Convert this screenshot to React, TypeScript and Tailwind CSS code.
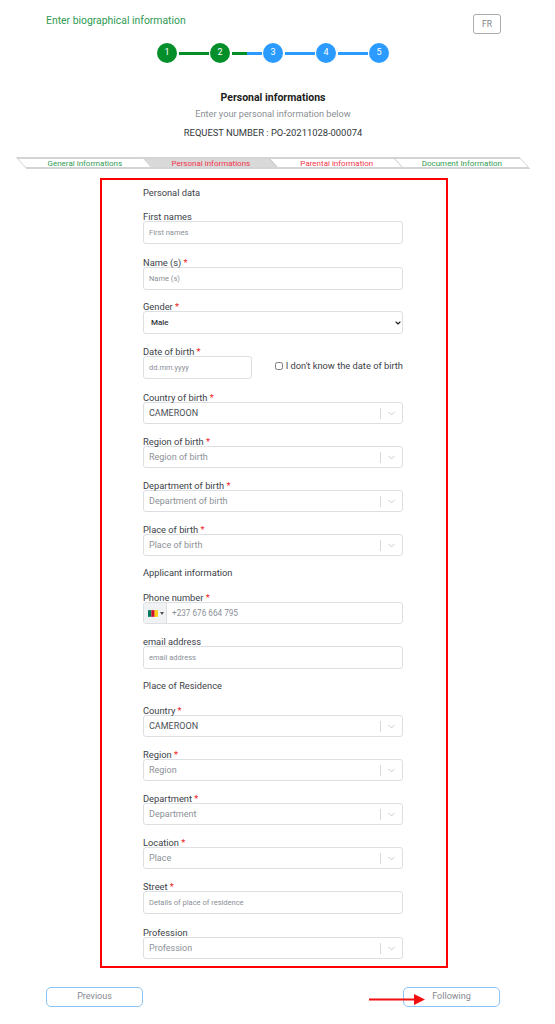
import { ChevronDown } from "lucide-react";

const inputBox = "block w-full rounded-[3px] border border-[#dcdfe3] bg-white text-[#6b7280] outline-none";

function Label({ text, required }: { text: string; required?: boolean }) {
  return (
    <div className="h-[11px] text-[9.3px] leading-[13px] whitespace-nowrap text-[#3c4248]">
      {text}
      {required && <span className="text-[#f01c1c]"> *</span>}
    </div>
  );
}

function TextField({ label, placeholder, required, className }: { label: string; placeholder: string; required?: boolean; className?: string }) {
  return (
    <div className={className}>
      <Label text={label} required={required} />
      <input
        placeholder={placeholder}
        className={`${inputBox} h-[23px] px-[5px] text-[7.5px] placeholder:text-[#8a9097]`}
      />
    </div>
  );
}

function PickField({ label, value, muted, required, className }: { label: string; value: string; muted?: boolean; required?: boolean; className?: string }) {
  return (
    <div className={className}>
      <Label text={label} required={required} />
      <div className={`${inputBox} flex h-[22px] items-center pl-[5px] text-[9px]`}>
        <span className={`pt-px ${muted ? "text-[#8c9197]" : "text-[#4b5157]"}`}>{value}</span>
        <div className="ml-auto h-[11px] w-px bg-[#d5d7da]" />
        <ChevronDown size={11} className="mx-[5px] text-[#c3c6ca]" />
      </div>
    </div>
  );
}

function Step({ n, done }: { n: number; done?: boolean }) {
  return (
    <div className={`grid size-[20px] place-items-center rounded-full text-[9px] text-white ${done ? "bg-[#058f2b]" : "bg-[#2b9bff]"}`}>
      {n}
    </div>
  );
}

export default function App() {
  return (
    <div className="h-[1024px] w-[555px] bg-white font-['Roboto',sans-serif]">
      <div className="w-[546px]">
        <div className="flex items-start justify-between pt-[14px] pr-[45px] pl-[46px]">
          <span className="text-[10.4px] leading-[13px] text-[#2f9a52]">Enter biographical information</span>
          <button className="h-[20px] w-[28px] rounded-[3px] border border-[#a9adb1] text-[8.5px] text-[#7b8085]">FR</button>
        </div>

        <div className="mt-[9px] flex items-center justify-center">
          <Step n={1} done />
          <div className="mx-[1.5px] h-[3px] w-[30px] bg-[#058f2b]" />
          <Step n={2} done />
          <div className="mx-[1.5px] flex h-[3px] w-[30px]">
            <div className="w-[15px] bg-[#058f2b]" />
            <div className="flex-1 bg-[#2b9bff]" />
          </div>
          <Step n={3} />
          <div className="mx-[1.5px] h-[3px] w-[30px] bg-[#2b9bff]" />
          <Step n={4} />
          <div className="mx-[1.5px] h-[3px] w-[30px] bg-[#2b9bff]" />
          <Step n={5} />
        </div>

        <div className="mt-[28px] text-center text-[10.5px] leading-[13px] font-bold text-[#1b1d20]">Personal informations</div>
        <div className="mt-[3px] text-center text-[9.2px] leading-[13px] text-[#8b8f94]">Enter your personal information below</div>
        <div className="mt-[6px] text-center text-[9.4px] leading-[13px] text-[#33373b]">REQUEST NUMBER : PO-20211028-000074</div>

        <div className="mx-auto mt-[18px] flex h-[12px] w-[504px] skew-x-[42deg] border-x border-y-2 border-[#d2d4d6] text-center text-[8px] leading-[9px]">
          <div className="flex-1 border-r border-[#c4c6c8]">
            <div className="-skew-x-[42deg] text-[#2f9a52]">General informations</div>
          </div>
          <div className="flex-1 border-r border-[#c4c6c8] bg-[#d9d9d9]">
            <div className="-skew-x-[42deg] text-[#f5344a]">Personal informations</div>
          </div>
          <div className="flex-1 border-r border-[#c4c6c8]">
            <div className="-skew-x-[42deg] text-[#f5344a]">Parental information</div>
          </div>
          <div className="flex-1">
            <div className="-skew-x-[42deg] text-[#2f9a52]">Document Information</div>
          </div>
        </div>

        <div className="mt-[9px] ml-[100px] h-[790px] w-[348px] border-2 border-[#ff0000] pt-[7px] pl-[41px]">
          <div className="w-[260px]">
            <div className="text-[9.3px] leading-[12px] text-[#3c4248]">Personal data</div>
            <TextField className="mt-[11px]" label="First names" placeholder="First names" />
            <TextField className="mt-[12px]" label="Name (s)" placeholder="Name (s)" required />

            <div className="mt-[10px]">
              <Label text="Gender" required />
              <div className="relative">
                <select className={`${inputBox} h-[23px] appearance-none pl-[7px] text-[8px] font-medium text-[#33373b]`}>
                  <option>Male</option>
                </select>
                <ChevronDown size={8} strokeWidth={3.5} className="absolute top-[8px] right-[1px] text-[#222]" />
              </div>
            </div>

            <div className="mt-[11px] flex items-end">
              <TextField className="w-[109px]" label="Date of birth" placeholder="dd.mm.yyyy" required />
              <label className="mb-[7px] ml-auto flex items-center gap-[3px] text-[9.3px] leading-[12px] whitespace-nowrap text-[#3c4248]">
                <input type="checkbox" className="size-[8px]" />
                I don't know the date of birth
              </label>
            </div>

            <PickField className="mt-[12px]" label="Country of birth" value="CAMEROON" required />
            <PickField className="mt-[11px]" label="Region of birth" value="Region of birth" muted required />
            <PickField className="mt-[11px]" label="Department of birth" value="Department of birth" muted required />
            <PickField className="mt-[11px]" label="Place of birth" value="Place of birth" muted required />

            <div className="mt-[11px] text-[9.3px] leading-[12px] text-[#3c4248]">Applicant information</div>
            <div className="mt-[12px]">
              <Label text="Phone number" required />
              <div className={`${inputBox} flex h-[22px] items-center overflow-hidden`}>
                <div className="flex h-full w-[23px] shrink-0 items-center gap-[2px] border-r border-[#dcdfe3] bg-[#f1f2f3] pl-[4px]">
                  <svg width="10" height="7" viewBox="0 0 9 6">
                    <rect width="3" height="6" fill="#007a5e" />
                    <rect x="3" width="3" height="6" fill="#ce1126" />
                    <rect x="6" width="3" height="6" fill="#fcd116" />
                  </svg>
                  <span className="size-0 border-x-[2px] border-t-[3px] border-x-transparent border-t-[#555]" />
                </div>
                <input placeholder="+237 676 664 795" className="ml-[5px] w-full text-[8.2px] outline-none placeholder:text-[#8a9097]" />
              </div>
            </div>
            <TextField className="mt-[11px]" label="email address" placeholder="email address" />

            <div className="mt-[11px] text-[9.3px] leading-[12px] text-[#3c4248]">Place of Residence</div>
            <PickField className="mt-[12px]" label="Country" value="CAMEROON" required />
            <PickField className="mt-[11px]" label="Region" value="Region" muted required />
            <PickField className="mt-[11px]" label="Department" value="Department" muted required />
            <PickField className="mt-[11px]" label="Location" value="Place" muted required />
            <TextField className="mt-[11px]" label="Street" placeholder="Details of place of residence" required />
            <PickField className="mt-[12px]" label="Profession" value="Profession" muted />
          </div>
        </div>

        <div className="mt-[19px] flex justify-between pr-[46px] pl-[46px]">
          <button className="block h-[20px] w-[97px] rounded-[5px] border border-[#8cc5f7] text-[9px] text-[#85898e]">Previous</button>
          <div className="relative">
            <button className="block h-[20px] w-[97px] rounded-[5px] border border-[#8cc5f7] text-[9px] text-[#85898e]">Following</button>
            <svg className="absolute top-[6px] -left-[34px]" width="57" height="14" viewBox="0 0 57 14">
              <rect y="5.5" width="46" height="2" fill="#f01010" />
              <polygon points="45,1 56,6.5 45,12" fill="#f01010" />
            </svg>
          </div>
        </div>
      </div>
    </div>
  );
}
